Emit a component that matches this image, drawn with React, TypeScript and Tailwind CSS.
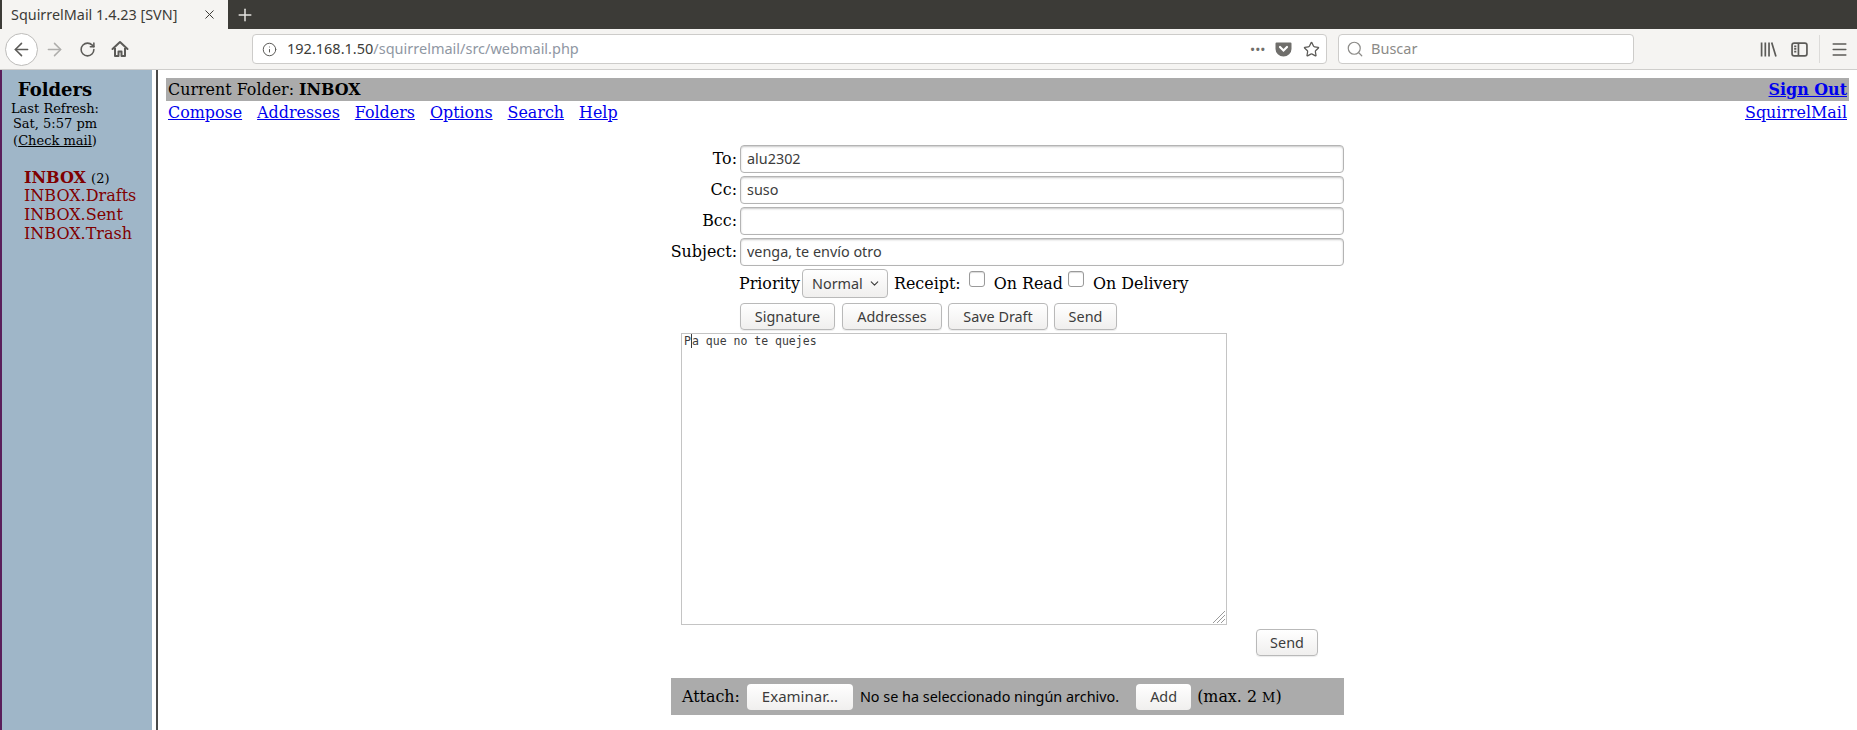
import { ArrowLeft, ArrowRight, ChevronDown, Info, Menu, RotateCw, Search, Star, X, Plus } from "lucide-react";

const UI = "font-['Noto_Sans','Open_Sans',sans-serif]";
const SERIF = "font-['DejaVu_Serif',serif]";

function Field({ label, value }: { label: string; value: string }) {
  return (
    <div className="flex items-center h-[31px]">
      <div className="w-[70px] text-right pr-[3px]">{label}</div>
      <input
        readOnly
        value={value}
        className={`${UI} w-[604px] h-[28px] rounded-[4px] border border-[#b4b4b4] shadow-[inset_0_1px_2px_rgba(0,0,0,0.22)] px-[6px] text-[14.4px] text-[#3c3c3c] outline-none`}
      />
    </div>
  );
}

function Btn({ children, className = "" }: { children: React.ReactNode; className?: string }) {
  return (
    <button className={`${UI} h-[27px] rounded-[4px] border border-[#b9b9b9] bg-gradient-to-b from-white to-[#f0efee] text-[14.4px] text-[#3c3c3c] shadow-[0_1px_1px_rgba(0,0,0,0.08)] ${className}`}>
      {children}
    </button>
  );
}

function Check() {
  return <span className="inline-block w-[16px] h-[16px] rounded-[3px] border border-[#9a9a9a] bg-white shadow-[inset_0_1px_1px_rgba(0,0,0,0.15)] -translate-y-[2px]" />;
}

export default function App() {
  return (
    <div className="h-[730px] overflow-hidden flex flex-col bg-white">
      {/* browser chrome */}
      <div className="h-[29px] flex bg-[#3c3b37] shrink-0">
        <div className={`${UI} w-[226px] ml-[2px] bg-[#f5f4f2] flex items-center pl-[9px] pr-[11px] text-[14.4px] text-[#3c3b37]`}>
          <span className="flex-1 whitespace-nowrap">SquirrelMail 1.4.23 [SVN]</span>
          <X size={15} strokeWidth={1.6} />
        </div>
        <div className="w-[34px] flex items-center justify-center text-[#e4e3e0]">
          <Plus size={20} strokeWidth={1.8} />
        </div>
      </div>
      <div className="h-[41px] shrink-0 flex items-center bg-[#f5f4f2] border-b border-[#cfcecc] text-[#5c5b58]">
        <div className="ml-[5px] w-[33px] h-[33px] rounded-full border border-[#bdbcba] bg-white flex items-center justify-center">
          <ArrowLeft size={21} strokeWidth={1.8} />
        </div>
        <ArrowRight size={21} strokeWidth={1.7} className="ml-[6px] text-[#aeadab]" />
        <RotateCw size={17} strokeWidth={2.2} className="ml-[14px]" />
        <svg width="18" height="18" viewBox="0 0 18 18" className="ml-[15px]" fill="none" stroke="#5c5b58" strokeWidth="2" strokeLinejoin="round">
          <path d="M1.5 9L9 2l7.5 7" strokeLinecap="round" />
          <path d="M4 8v8h3.5v-4.5h3V16H14V8" />
        </svg>
        <div className="ml-[123px] w-[1075px] h-[30px] rounded-[4px] border border-[#cdccca] bg-white flex items-center pl-[9px] pr-[6px]">
          <Info size={15} strokeWidth={1.6} />
          <span className={`${UI} ml-[10px] flex-1 text-[14.5px] text-[#3c3b37]`}>
            192.168.1.50<span className="text-[#8f97a3]">/squirrelmail/src/webmail.php</span>
          </span>
          <span className="text-[#6f6e6b] text-[11px] font-bold tracking-[1px] mr-[9px]">•••</span>
          <svg width="17" height="16" viewBox="0 0 16 16" className="mr-[11px]">
            <path d="M1 1.5h14a1 1 0 0 1 1 1V8A8 7.5 0 0 1 0 8V2.5a1 1 0 0 1 1-1z" fill="#6f6e6b" />
            <path d="M4.5 6L8 9.500 11.500 6" fill="none" stroke="#fff" strokeWidth="2.2" strokeLinecap="round" />
          </svg>
          <Star size={17} strokeWidth={1.8} />
        </div>
        <div className="ml-[11px] w-[296px] h-[30px] rounded-[4px] border border-[#cdccca] bg-white flex items-center pl-[7px]">
          <Search size={18} strokeWidth={1.6} className="text-[#8c8b88]" />
          <span className={`${UI} ml-[7px] text-[14.5px] text-[#8c8b88]`}>Buscar</span>
        </div>
        <svg width="17" height="17" viewBox="0 0 16 16" className="ml-[126px]" fill="none" stroke="#5c5b58" strokeWidth="1.6">
          <path d="M1.500 1.500v13M5 1.500v13M8.500 1.500v13M11 1.500l4 13" />
        </svg>
        <svg width="17" height="15" viewBox="0 0 16 14" className="ml-[14px]" fill="none" stroke="#5c5b58" strokeWidth="1.6">
          <rect x="1" y="1" width="14" height="12" rx="2" />
          <path d="M7 1v12M3 4h2M3 6.500h2M3 9h2" />
        </svg>
        <div className="ml-[11px] h-[28px] border-l border-[#dcdbd9]" />
        <Menu size={19} strokeWidth={1.9} className="ml-[10px]" />
      </div>

      {/* squirrelmail frames */}
      <div className={`${SERIF} flex-1 flex min-h-0 text-[15.9px] text-black`}>
        <div className="w-[2px] bg-[#5a1e5a]" />
        <div className="w-[150px] bg-[#9fb6c8]">
          <div className="pt-[9px] h-[68px] w-[106px] text-center text-[13px] leading-[16px]">
            <div className="text-[18px] font-bold leading-[22px]">Folders</div>
            <div>Last Refresh:</div>
            <div className="-mt-[1px]">Sat, 5:57 pm</div>
            <div className="mt-[1px]">(<span className="underline">Check mail</span>)</div>
          </div>
          <div className="mt-[30px] pl-[22px] text-[#800000] text-[16px] leading-[19px]">
            <div className="whitespace-nowrap h-[18px]">
              <b>INBOX</b> <span className="text-[13px] text-black">(2)</span>
            </div>
            <div>INBOX.Drafts</div>
            <div>INBOX.Sent</div>
            <div>INBOX.Trash</div>
          </div>
        </div>
        <div className="w-[4px]" />
        <div className="w-[2px] bg-[#4a4a4a]" />
        <div className="flex-1 min-w-0 pl-[8px] pr-[8px] pt-[8px]">
          <div className="h-[23px] bg-[#ababab] flex items-center justify-between px-[2px]">
            <div>
              Current Folder: <b>INBOX</b>
            </div>
            <a className="font-bold underline text-[#0000ee]">Sign Out</a>
          </div>
          <div className="h-[22px] pt-[2px] flex items-center justify-between px-[2px] text-[#0000ee] underline">
            <div className="flex gap-[15px]">
              <a>Compose</a>
              <a>Addresses</a>
              <a>Folders</a>
              <a>Options</a>
              <a>Search</a>
              <a>Help</a>
            </div>
            <a>SquirrelMail</a>
          </div>

          <div className="ml-[504px] w-[676px] mt-[20px]">
            <Field label="To:" value="alu2302" />
            <Field label="Cc:" value="suso" />
            <Field label="Bcc:" value="" />
            <Field label="Subject:" value="venga, te envío otro" />
            <div className="ml-[69px] h-[33px] flex items-center whitespace-nowrap">
              <span>Priority</span>
              <div className={`${UI} ml-[2px] w-[86px] h-[29px] rounded-[4px] border border-[#b9b9b9] bg-gradient-to-b from-white to-[#f0efee] flex items-center justify-between pl-[9px] pr-[6px] text-[14.4px] text-[#3c3c3c]`}>
                Normal <ChevronDown size={13} strokeWidth={2} />
              </div>
              <span className="ml-[6px]">Receipt:</span>
              <span className="ml-[8px]"><Check /></span>
              <span className="ml-[9px]">On Read</span>
              <span className="ml-[5px]"><Check /></span>
              <span className="ml-[9px]">On Delivery</span>
            </div>
            <div className="ml-[70px] mt-[3px] flex gap-[6px]">
              <Btn className="w-[95px]">Signature</Btn>
              <Btn className="w-[100px] ml-[1px]">Addresses</Btn>
              <Btn className="w-[100px]">Save Draft</Btn>
              <Btn className="w-[63px]">Send</Btn>
            </div>
          </div>
          <div className="ml-[515px] w-[546px] h-[292px] mt-[3px] border border-[#c4c4c4] relative font-['DejaVu_Sans_Mono',monospace] text-[11.5px] leading-[14px] pl-[2px] text-[#3c3c3c]">
            P<span className="inline-block w-0 h-[14px] border-l border-[#3c3c3c] align-top" />a que no te quejes
            <svg width="14" height="14" viewBox="0 0 14 14" className="absolute right-0 bottom-0" stroke="#9a9a9a" strokeWidth="1">
              <path d="M13 1L1 13M13 5L5 13M13 9L9 13" />
            </svg>
          </div>
          <div className="ml-[1090px] mt-[4px]">
            <Btn className="w-[62px]">Send</Btn>
          </div>
          <div className="ml-[505px] w-[673px] h-[37px] mt-[22px] bg-[#ababab] flex items-center pl-[11px] whitespace-nowrap">
            <span>Attach:</span>
            <span className={`${UI} ml-[7px] w-[106px] h-[26px] rounded-[4px] bg-gradient-to-b from-white to-[#f0efee] flex items-center justify-center text-[15px] text-[#3c3c3c]`}>Examinar...</span>
            <span className={`${UI} ml-[7px] text-[14.4px] text-black`}>No se ha seleccionado ningún archivo.</span>
            <span className={`${UI} ml-[17px] w-[55px] h-[26px] rounded-[4px] bg-gradient-to-b from-white to-[#f0efee] flex items-center justify-center text-[14.4px] text-[#3c3c3c]`}>Add</span>
            <span className="ml-[6px]">(max. 2 <span className="text-[13px]">M</span>)</span>
          </div>
        </div>
      </div>
    </div>
  );
}
